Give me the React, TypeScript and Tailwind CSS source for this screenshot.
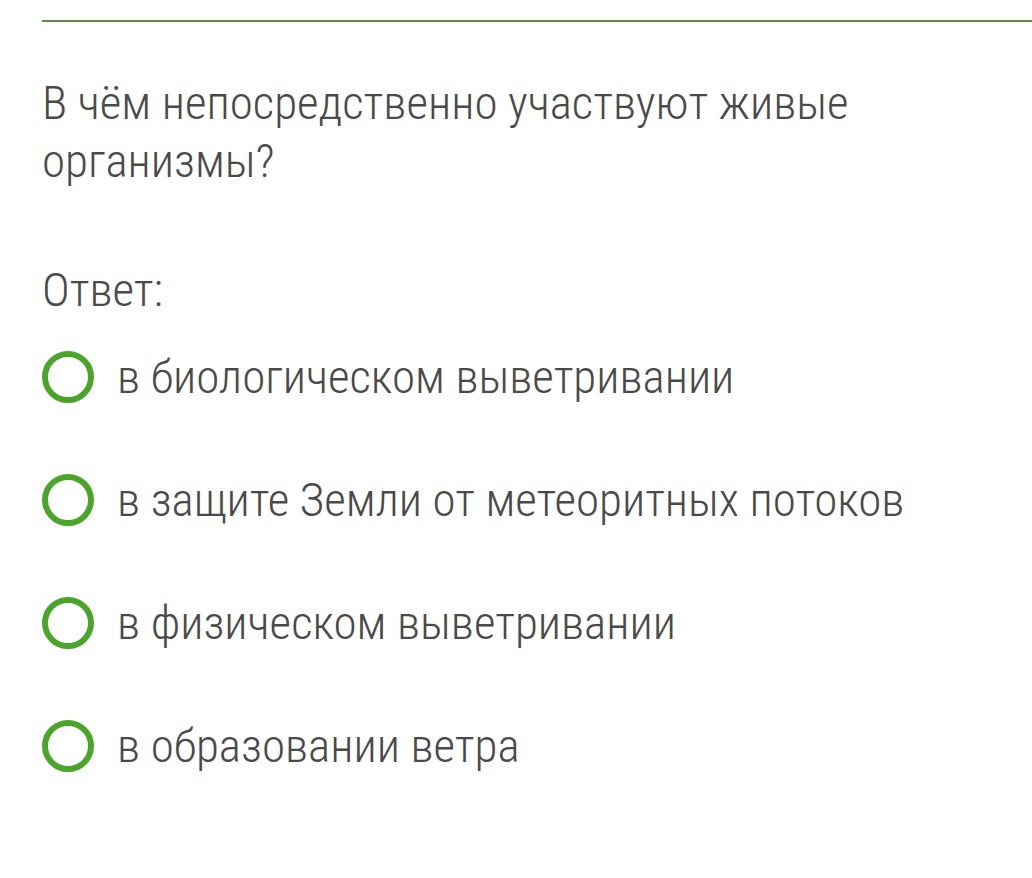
import React from 'react';

const options = [
  'в биологическом выветривании',
  'в защите Земли от метеоритных потоков',
  'в физическом выветривании',
  'в образовании ветра',
];

const App: React.FC = () => {
  return (
    <div className="w-[1032px] h-[878px] bg-white overflow-hidden font-['Roboto',sans-serif] font-light font-stretch-condensed text-[#4a4a4a]">
      <div className="pt-5 pl-[42px]">
        {/* top rule */}
        <div className="h-[2px] bg-[#5e8a45]" />

        {/* question */}
        <p className="mt-[52px] text-[47px] leading-[58px] pr-10">
          В чём непосредственно участвуют живые организмы?
        </p>

        <p className="mt-[71px] text-[47px] leading-[58px]">Ответ:</p>

        {/* options */}
        <div className="mt-[29px] flex flex-col gap-[65px]">
          {options.map((opt) => (
            <label key={opt} className="flex items-center gap-[23px] h-[58px]">
              <span className="w-[52px] h-[52px] rounded-full border-[6px] border-[#4aa52a] shrink-0" />
              <span className="text-[47px] leading-[58px]">{opt}</span>
            </label>
          ))}
        </div>
      </div>
    </div>
  );
};

export default App;
